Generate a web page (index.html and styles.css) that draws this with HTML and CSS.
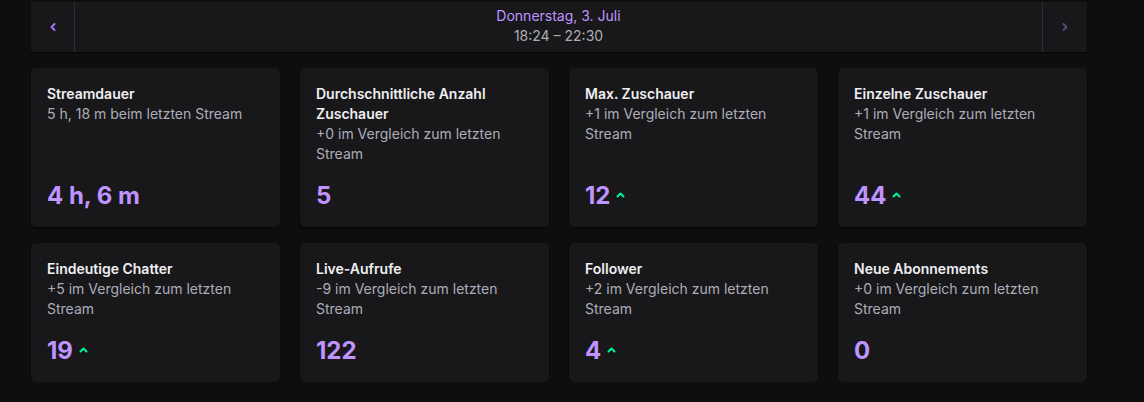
FILE: index.html
```html
<!DOCTYPE html>
<html lang="de">
<head>
<meta charset="utf-8">
<title>Stream-Zusammenfassung</title>
<link rel="stylesheet" href="styles.css">
</head>
<body>
<div class="page">
  <div class="nav">
    <button class="nav-btn prev" aria-label="Zurück">
      <svg width="8" height="10" viewBox="0 0 8 10"><polyline points="5.5,2 2.5,5 5.5,8" fill="none" stroke="currentColor" stroke-width="2" stroke-linecap="round" stroke-linejoin="round"/></svg>
    </button>
    <div class="nav-date">
      <div class="date">Donnerstag, 3. Juli</div>
      <div class="time">18:24 – 22:30</div>
    </div>
    <button class="nav-btn next" aria-label="Weiter">
      <svg width="8" height="10" viewBox="0 0 8 10"><polyline points="2.5,2 5.5,5 2.5,8" fill="none" stroke="currentColor" stroke-width="2" stroke-linecap="round" stroke-linejoin="round"/></svg>
    </button>
  </div>

  <div class="grid">
    <div class="card">
      <div class="title">Streamdauer</div>
      <div class="desc">5 h, 18 m beim letzten Stream</div>
      <div class="value">4 h, 6 m</div>
    </div>
    <div class="card">
      <div class="title">Durchschnittliche Anzahl Zuschauer</div>
      <div class="desc">+0 im Vergleich zum letzten Stream</div>
      <div class="value">5</div>
    </div>
    <div class="card">
      <div class="title">Max. Zuschauer</div>
      <div class="desc">+1 im Vergleich zum letzten Stream</div>
      <div class="value">12<svg class="up" width="9" height="6" viewBox="0 0 9 6"><polyline points="1.5,4.5 4.5,1.5 7.5,4.5" fill="none" stroke="currentColor" stroke-width="2" stroke-linecap="round" stroke-linejoin="round"/></svg></div>
    </div>
    <div class="card">
      <div class="title">Einzelne Zuschauer</div>
      <div class="desc">+1 im Vergleich zum letzten Stream</div>
      <div class="value">44<svg class="up" width="9" height="6" viewBox="0 0 9 6"><polyline points="1.5,4.5 4.5,1.5 7.5,4.5" fill="none" stroke="currentColor" stroke-width="2" stroke-linecap="round" stroke-linejoin="round"/></svg></div>
    </div>
    <div class="card">
      <div class="title">Eindeutige Chatter</div>
      <div class="desc">+5 im Vergleich zum letzten Stream</div>
      <div class="value">19<svg class="up" width="9" height="6" viewBox="0 0 9 6"><polyline points="1.5,4.5 4.5,1.5 7.5,4.5" fill="none" stroke="currentColor" stroke-width="2" stroke-linecap="round" stroke-linejoin="round"/></svg></div>
    </div>
    <div class="card">
      <div class="title">Live-Aufrufe</div>
      <div class="desc">-9 im Vergleich zum letzten Stream</div>
      <div class="value">122</div>
    </div>
    <div class="card">
      <div class="title">Follower</div>
      <div class="desc">+2 im Vergleich zum letzten Stream</div>
      <div class="value">4<svg class="up" width="9" height="6" viewBox="0 0 9 6"><polyline points="1.5,4.5 4.5,1.5 7.5,4.5" fill="none" stroke="currentColor" stroke-width="2" stroke-linecap="round" stroke-linejoin="round"/></svg></div>
    </div>
    <div class="card">
      <div class="title">Neue Abonnements</div>
      <div class="desc">+0 im Vergleich zum letzten Stream</div>
      <div class="value">0</div>
    </div>
  </div>
</div>
</body>
</html>
```

FILE: styles.css
```css
html, body {
  margin: 0;
  padding: 0;
  background: #0e0e10;
}
body {
  font-family: Inter, "Noto Sans", "Liberation Sans", sans-serif;
  font-size: 14px;
  line-height: 19.5px;
  color: #efeff1;
}
.page {
  width: 1056px;
  padding: 2px 0 0 31px;
}
.nav {
  display: flex;
  height: 50px;
  background: #18181b;
  box-shadow: 0 1px 1px rgba(0,0,0,0.5);
}
.nav-btn {
  width: 44px;
  flex: none;
  background: transparent;
  border: 0;
  padding: 0;
  display: flex;
  align-items: center;
  justify-content: center;
  cursor: pointer;
}
.nav-btn.prev {
  color: #a970ff;
  border-right: 1px solid #2c2c31;
}
.nav-btn.next {
  width: 45px;
  color: #5a4681;
  border-left: 1px solid #2c2c31;
}
.nav-date {
  flex: 1;
  display: flex;
  flex-direction: column;
  align-items: center;
  justify-content: center;
  padding-bottom: 2px;
}
.date {
  color: #bf94ff;
  line-height: 20px;
}
.time {
  color: #adadb8;
  line-height: 20px;
}
.grid {
  margin-top: 16px;
  display: grid;
  grid-template-columns: repeat(4, 249px);
  column-gap: 20px;
  row-gap: 16px;
}
.card {
  background: #18181b;
  border-radius: 5px;
  box-shadow: 0 1px 2px rgba(0,0,0,0.6);
  padding: 16px;
  display: flex;
  flex-direction: column;
}
.title {
  font-weight: 600;
  color: #efeff1;
  line-height: 20px;
}
.desc {
  color: #adadb8;
}
.value {
  margin-top: auto;
  padding-top: 18px;
  display: flex;
  align-items: center;
  gap: 6px;
  font-size: 24px;
  font-weight: 700;
  line-height: 30px;
  color: #bf94ff;
}
.up {
  color: #00f593;
  margin-bottom: 3px;
}
```
